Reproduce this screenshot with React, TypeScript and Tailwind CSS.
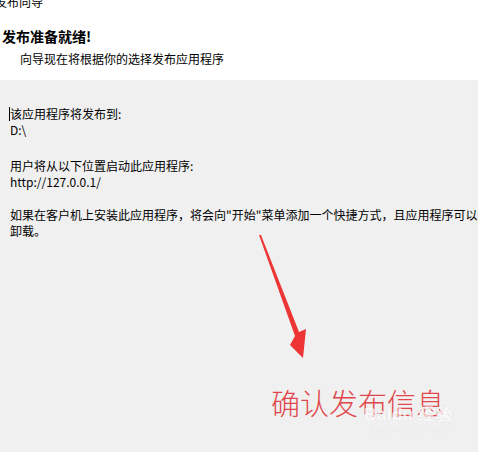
import React from 'react';

const cjk = { fontFamily: '"Microsoft YaHei", "Noto Sans CJK SC", "Liberation Sans", sans-serif' };

function Arrow() {
  return (
    <svg className="absolute left-0 top-0" width="478" height="452" viewBox="0 0 478 452">
      <polygon
        points="259,235 261,235 299,332 306,329 303,358 290,345 295,336"
        fill="#ee3535"
      />
    </svg>
  );
}

function App() {
  return (
    <div className="relative w-[478px] h-[452px] overflow-hidden bg-white text-black" style={cjk}>
      {/* Header */}
      <div className="flex flex-col items-start h-[80px] bg-white">
        <div className="text-[12px] leading-[14px] -mt-[5px] -ml-[5px]">发布向导</div>
        <div className="mt-[19px] ml-[2px] text-[14px] leading-[16px] font-bold">发布准备就绪!</div>
        <div className="mt-[7px] ml-[20px] text-[12px] leading-[16px]">向导现在将根据你的选择发布应用程序</div>
      </div>

      {/* Body */}
      <div className="relative flex flex-col items-start h-[372px] bg-[#f0f0f0] pt-[26px] pl-[10px] text-[12px] leading-[16px] whitespace-nowrap">
        <div className="relative">
          <span className="absolute -left-[1px] top-[1px] w-px h-[14px] bg-black" />
          该应用程序将发布到:
        </div>
        <div>D:\</div>
        <div className="mt-[20px]">用户将从以下位置启动此应用程序:</div>
        <div>http://127.0.0.1/</div>
        <div className="mt-[17px]">如果在客户机上安装此应用程序，将会向"开始"菜单添加一个快捷方式，且应用程序可以通过"添加或删除程序"</div>
        <div>卸载。</div>

        <div className="mt-[147px] ml-[261px] text-[29px] leading-[32px] text-[#e0474c] font-light">确认发布信息</div>
        <div className="absolute left-[364px] top-[326px] flex flex-col items-start text-white opacity-70" style={{ fontFamily: '"Liberation Sans", sans-serif', textShadow: '0 0 1px #c8c8c8' }}>
          <span className="text-[17px] leading-[18px] font-bold tracking-wide">Baidu 经验</span>
          <span className="text-[10px] leading-[12px] ml-[6px]">jingyan.baidu.com</span>
        </div>
      </div>

      <Arrow />
    </div>
  );
}

export default App;
